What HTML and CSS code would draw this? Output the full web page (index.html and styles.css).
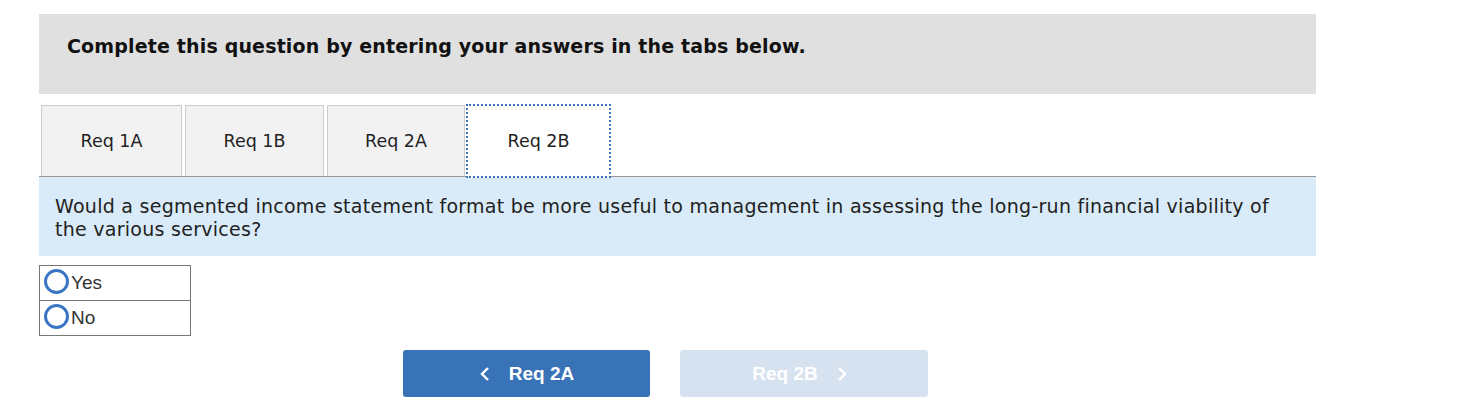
FILE: index.html
```html
<!DOCTYPE html>
<html>
<head>
<meta charset="utf-8">
<link rel="stylesheet" href="styles.css">
</head>
<body>
<div class="wrap">
  <div class="instructions">Complete this question by entering your answers in the tabs below.</div>
  <div class="tabs">
    <div class="tab t1">Req 1A</div>
    <div class="tab t2">Req 1B</div>
    <div class="tab t3">Req 2A</div>
    <div class="tab active">Req 2B</div>
  </div>
  <div class="panel">Would a segmented income statement format be more useful to management in assessing the long-run financial viability of the various services?</div>
  <table class="choices">
    <tr><td><span class="radio"></span>Yes</td></tr>
    <tr><td><span class="radio"></span>No</td></tr>
  </table>
  <div class="nav">
    <button class="btn prev"><svg width="12" height="16" viewBox="0 0 12 16"><path d="M9 2 L3 8 L9 14" fill="none" stroke="#fff" stroke-width="2.4"/></svg><span>Req 2A</span></button>
    <button class="btn next"><span>Req 2B</span><svg width="12" height="16" viewBox="0 0 12 16"><path d="M3 2 L9 8 L3 14" fill="none" stroke="#fff" stroke-width="2.4"/></svg></button>
  </div>
</div>
</body>
</html>
```
FILE: styles.css
```css
html, body { margin: 0; padding: 0; background: #fff; }
.wrap { margin: 14px 0 0 39px; width: 1277px; }
.instructions {
  background: #e0e0e0;
  height: 80px;
  box-sizing: border-box;
  padding: 21px 0 0 28px;
  font-family: "DejaVu Sans", Verdana, sans-serif;
  font-weight: bold;
  font-size: 19px;
  letter-spacing: 0.16px;
  color: #111;
}
.tabs {
  display: flex;
  margin-top: 11px;
  padding-left: 2px;
  border-bottom: 1px solid #999;
  height: 71px;
}
.tab {
  box-sizing: border-box;
  height: 71px;
  background: #f2f2f2;
  border: 1px solid #ccc;
  border-bottom: none;
  margin-right: 3px;
  display: flex;
  align-items: center;
  justify-content: center;
  font-family: "DejaVu Sans", Verdana, sans-serif;
  font-size: 17.5px;
  color: #222;
}
.t1 { width: 141px; }
.t2 { width: 139px; }
.t3 { width: 138px; margin-right: 1px; }
.tab.active {
  width: 145px;
  background: #fff;
  border: 2px dotted #3a75c4;
  height: 74px;
  margin-top: -1px;
  position: relative;
  z-index: 1;
}
.panel {
  background: #d9ebf8;
  height: 79px;
  box-sizing: border-box;
  padding: 18px 40px 0 16px;
  font-family: "DejaVu Sans", Verdana, sans-serif;
  font-size: 19px;
  letter-spacing: 0.27px;
  line-height: 23px;
  color: #222;
}
.choices {
  margin-top: 9px;
  border-collapse: collapse;
  width: 152px;
  font-family: "Liberation Sans", Arial, sans-serif;
  font-size: 19px;
  color: #333;
}
.choices td {
  border: 1px solid #777;
  height: 34px;
  padding: 0 0 0 4px;
}
.radio {
  display: inline-block;
  width: 19px;
  height: 19px;
  border: 3px solid #3a75c4;
  border-radius: 50%;
  vertical-align: middle;
  margin-right: 2px;
  margin-top: -3px;
}
.nav {
  display: flex;
  margin: 14px 0 0 364px;
  gap: 30px;
}
.btn {
  width: 247px;
  height: 47px;
  border: none;
  border-radius: 3px;
  font-family: "Liberation Sans", Arial, sans-serif;
  font-weight: bold;
  font-size: 19px;
  color: #fff;
  display: flex;
  align-items: center;
  justify-content: center;
  gap: 18px;
  padding: 0;
}
.prev { background: #3873b8; }
.next { background: #d6e2f0; width: 248px; }
.next span { margin-left: -8px; }
```
